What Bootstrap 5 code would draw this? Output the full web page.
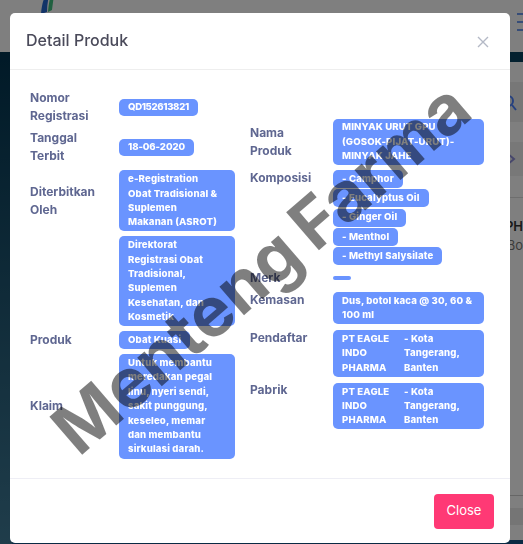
<!DOCTYPE html>
<html lang="id">
<head>
<meta charset="utf-8">
<title>Detail Produk</title>
<link href="https://cdn.jsdelivr.net/npm/bootstrap@5.3.0/dist/css/bootstrap.min.css" rel="stylesheet">
<style>
html,body{height:100%;overflow:hidden;font-family:"Inter","Noto Sans",sans-serif;}
.pg{height:544px;width:523px;background:#fff;}
.pg-top{height:52px;overflow:hidden;}
.pg-logo{margin-left:40px;margin-top:-14px;}
.pg-burger{margin-right:-14px;margin-top:13px;}
.pg-main{height:492px;}
.pg-side{width:12px;background:linear-gradient(#02344f,#3f7a96);}
.pg-hero{height:10px;background:#06405e;}
.pg-b1{height:20px;}
.pg-b2{height:40px;background:#eee;}
.ico-s{margin-right:6px;}
.pg-b3{height:20px;}
.pg-b4{height:34px;background:#f0f0f0;}
.ico-c{margin-right:7px;}
.pg-b5{height:21px;}
.pg-b6{height:298px;border-top:1px solid #ddd;font-size:13px;line-height:19px;overflow:hidden;}
.pg-name{font-weight:600;color:#333;margin-top:19px;}
.pg-sub{color:#777;}
.pg-b7{height:13px;border-top:1px solid #ccc;}
.pg-b8{height:17px;background:#eaeaea;}
.pg-b85{height:15px;}
.pg-b9{height:4px;background:#145488;}
.dlg{max-width:500px;width:500px;margin:13px 0 0 10px;}
.dlg .modal-content{border:0;border-radius:5px;color:#444;}
.dlg .modal-header{height:57px;padding:0 21px 0 16px;border-bottom:1px solid #eee;}
.dlg-title{font-size:16px;font-weight:500;color:#4a4a5a;margin:0;}
.dlg-x{border:0;background:none;padding:0;line-height:0;margin-top:1px;}
.dlg .modal-body{padding:19px 26px 19px 20px;height:408px;gap:15px;}
.col-l{width:205px;gap:5px;}
.r-first{margin-bottom:-1px;}
.col-r{width:234px;}
.lbl{font-size:12px;line-height:18px;font-weight:700;color:#5f6791;flex:none;}
.col-l .lbl{width:89px;}
.col-r .lbl{width:83px;}
.lbl-top{margin-top:-1.5px;}
.tag{display:inline-block;background:#6a94ff;color:#fff;font-size:9.6px;line-height:14.4px;font-weight:800;letter-spacing:.15px;padding:1.7px 9px;border-radius:5px;white-space:nowrap;}
.tag-num{letter-spacing:-.35px;}
.tag-date{letter-spacing:-.1px;}
.tag-l{width:116px;}
.tag-r{width:151px;}
.tag-c1{width:62px;}
.tag-stack{gap:1.5px;}
.tag-empty{width:18px;height:4px;padding:0;}
.r-nama{margin-bottom:5px;}
.r-komp{margin-bottom:4px;}
.r-merk{height:18px;margin-bottom:5px;}
.r-kem,.r-pend{margin-bottom:6px;}
.dlg .modal-footer{height:65px;padding:0 16px 0 0;border-top:1px solid #eeeef5;}
.btn-tutup{background:#ff3975;border:0;color:#fff;font-size:13px;width:60px;height:35px;padding:0;border-radius:4px;margin:0;}
.wm{position:fixed;left:261px;top:268px;transform:translate(-50%,-50%) rotate(-40.8deg);font-size:69px;font-weight:700;word-spacing:-4px;color:rgba(0,0,0,.5);white-space:nowrap;z-index:2000;pointer-events:none;line-height:1;}
</style>
</head>
<body>
<div class="pg d-flex flex-column">
  <div class="pg-top d-flex justify-content-between align-items-start">
    <svg class="pg-logo" width="16" height="40" viewBox="0 0 16 40"><path d="M13 0C6 6 2 14 1 28l6-2C7 16 9 8 13 0z" fill="#2468d0"/><path d="M16 0C11 6 9 14 8 26l4-2C13 16 14 8 16 0z" fill="#40c080"/></svg>
    <svg class="pg-burger" width="20" height="18" viewBox="0 0 20 18"><path d="M0 1h20M0 9h20M0 17h20" stroke="#6f9af0" stroke-width="2"/></svg>
  </div>
  <div class="pg-main d-flex">
    <div class="pg-side"></div>
    <div class="flex-grow-1 d-flex flex-column">
      <div class="pg-hero"></div>
      <div class="pg-b1"></div>
      <div class="pg-b2 d-flex justify-content-end align-items-center"><svg class="ico-s" width="14" height="18" viewBox="0 0 14 18"><circle cx="5" cy="8" r="5" fill="none" stroke="#4a80ff" stroke-width="2"/><path d="M9 12l4 5" stroke="#4a80ff" stroke-width="2"/></svg></div>
      <div class="pg-b3"></div>
      <div class="pg-b4 d-flex justify-content-end align-items-center"><svg class="ico-c" width="10" height="14" viewBox="0 0 10 14"><path d="M2 2l6 5-6 5" fill="none" stroke="#8f8fd8" stroke-width="2"/></svg></div>
      <div class="pg-b5"></div>
      <div class="pg-b6 text-end"><div class="pg-name">PH</div><div class="pg-sub">Bo</div></div>
      <div class="pg-b7"></div>
      <div class="pg-b8"></div>
      <div class="pg-b85"></div>
      <div class="pg-b9"></div>
    </div>
  </div>
</div>

<div class="modal-backdrop show"></div>
<div class="modal d-block">
  <div class="modal-dialog dlg">
    <div class="modal-content">
      <div class="modal-header">
        <h5 class="dlg-title">Detail Produk</h5>
        <button type="button" class="dlg-x" aria-label="Close"><svg width="12" height="12" viewBox="0 0 12 12"><path d="M1 1l10 10M11 1L1 11" stroke="#b4b9c6" stroke-width="1.4" fill="none"/></svg></button>
      </div>
      <div class="modal-body d-flex align-items-center">
        <div class="col-l d-flex flex-column">
          <div class="d-flex align-items-center r-first"><div class="lbl">Nomor<br>Registrasi</div><span class="tag tag-num">QD152613821</span></div>
          <div class="d-flex align-items-center"><div class="lbl">Tanggal<br>Terbit</div><span class="tag tag-date">18-06-2020</span></div>
          <div class="d-flex align-items-center"><div class="lbl">Diterbitkan<br>Oleh</div><span class="tag tag-l">e-Registration<br>Obat Tradisional &amp;<br>Suplemen<br>Makanan (ASROT)</span></div>
          <div class="d-flex align-items-center"><div class="lbl"></div><span class="tag tag-l">Direktorat<br>Registrasi Obat<br>Tradisional,<br>Suplemen<br>Kesehatan, dan<br>Kosmetik</span></div>
          <div class="d-flex align-items-center"><div class="lbl">Produk</div><span class="tag">Obat Kuasi</span></div>
          <div class="d-flex align-items-center"><div class="lbl">Klaim</div><span class="tag tag-l">Untuk membantu<br>meredakan pegal<br>linu, nyeri sendi,<br>sakit punggung,<br>keseleo, memar<br>dan membantu<br>sirkulasi darah.</span></div>
        </div>
        <div class="col-r d-flex flex-column">
          <div class="d-flex align-items-center r-nama"><div class="lbl">Nama<br>Produk</div><span class="tag tag-r">MINYAK URUT GPU<br>(GOSOK-PIJAT-URUT)-<br>MINYAK JAHE</span></div>
          <div class="d-flex align-items-start r-komp"><div class="lbl lbl-top">Komposisi</div>
            <div class="d-flex flex-column align-items-start tag-stack">
              <span class="tag">- Camphor</span><span class="tag">- Eucalyptus Oil</span><span class="tag">- Ginger Oil</span><span class="tag">- Menthol</span><span class="tag">- Methyl Salysilate</span>
            </div>
          </div>
          <div class="d-flex align-items-center r-merk"><div class="lbl">Merk</div><span class="tag tag-empty"></span></div>
          <div class="d-flex align-items-start r-kem"><div class="lbl lbl-top">Kemasan</div><span class="tag tag-r">Dus, botol kaca @ 30, 60 &amp;<br>100 ml</span></div>
          <div class="d-flex align-items-start r-pend"><div class="lbl lbl-top">Pendaftar</div><div class="tag tag-r d-flex"><div class="tag-c1">PT EAGLE<br>INDO<br>PHARMA</div><div>- Kota<br>Tangerang,<br>Banten</div></div></div>
          <div class="d-flex align-items-start"><div class="lbl lbl-top">Pabrik</div><div class="tag tag-r d-flex"><div class="tag-c1">PT EAGLE<br>INDO<br>PHARMA</div><div>- Kota<br>Tangerang,<br>Banten</div></div></div>
        </div>
      </div>
      <div class="modal-footer">
        <button type="button" class="btn btn-tutup">Close</button>
      </div>
    </div>
  </div>
</div>
<div class="wm">Menteng Farma</div>
<script src="https://cdn.jsdelivr.net/npm/bootstrap@5.3.0/dist/js/bootstrap.bundle.min.js"></script>
</body>
</html>
